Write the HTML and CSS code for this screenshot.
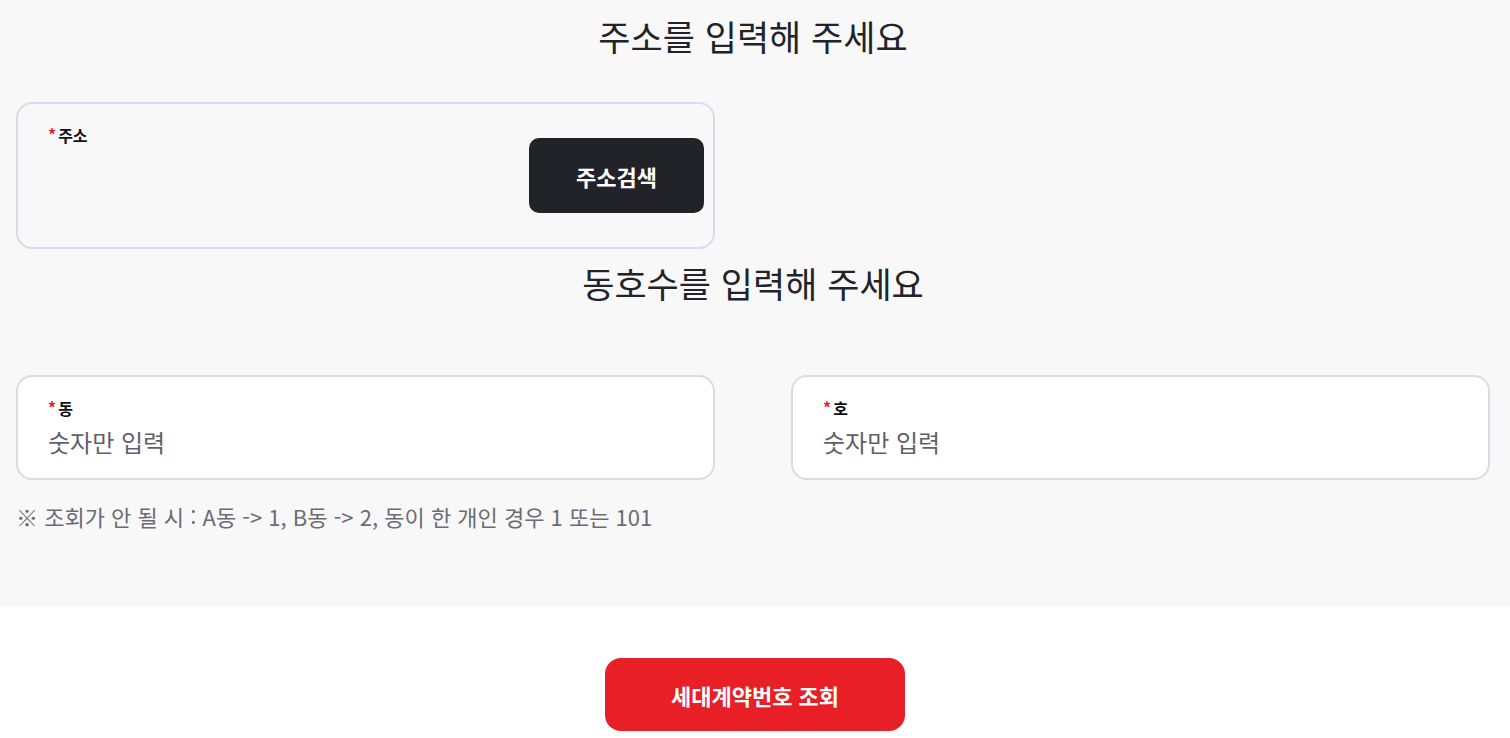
FILE: index.html
```html
<!DOCTYPE html>
<html lang="ko">
<head>
    <meta charset="UTF-8">
    <meta name="viewport" content="width=device-width, initial-scale=1.0">
    <title>세대계약번호 조회</title>
    <link rel="stylesheet" href="styles.css">
</head>
<body>
    <section class="form-section">
        <h2 class="form-title">주소를 입력해 주세요</h2>

        <div class="address-box">
            <label class="field-label" for="address"><span class="req">*</span>주소</label>
            <button class="search-btn" type="button">주소검색</button>
        </div>

        <h2 class="form-title second">동호수를 입력해 주세요</h2>

        <div class="unit-row">
            <div class="field-box">
                <label class="field-label" for="dong"><span class="req">*</span>동</label>
                <input type="text" id="dong" placeholder="숫자만 입력">
            </div>
            <div class="field-box">
                <label class="field-label" for="ho"><span class="req">*</span>호</label>
                <input type="text" id="ho" placeholder="숫자만 입력">
            </div>
        </div>

        <p class="notice">※ 조회가 안 될 시 : A동 -&gt; 1, B동 -&gt; 2, 동이 한 개인 경우 1 또는 101</p>
    </section>

    <div class="actions">
        <button class="submit-btn" type="button">세대계약번호 조회</button>
    </div>
</body>
</html>
```

FILE: styles.css
```css
body {
    margin: 0;
    padding: 0;
    background: #ffffff;
    font-family: "Noto Sans CJK KR", "Noto Sans", sans-serif;
    color: #222328;
}

.form-section {
    background: #f8f8f9;
    padding: 14px 20px 76px 16px;
}

.form-title {
    margin: 0;
    font-size: 35px;
    line-height: 44px;
    font-weight: 400;
    text-align: center;
    color: #222328;
}

.form-title.second {
    margin-top: 12px;
}

.address-box {
    width: 699px;
    box-sizing: border-box;
    margin-top: 44px;
    display: flex;
    padding: 21px 9px 23px 30px;
    border: 2px solid #d9dbe6;
    border-radius: 16px;
    background: #f8f8f9;
}

.field-label {
    display: block;
    font-size: 16px;
    line-height: 20px;
    font-weight: 700;
    color: #111111;
    align-self: flex-start;
}

.req {
    color: #e81f26;
    margin-right: 2px;
    position: relative;
    top: -1px;
}

.search-btn {
    margin: 13px 0 11px auto;
    width: 175px;
    height: 75px;
    border: none;
    border-radius: 10px;
    background: #222328;
    color: #ffffff;
    font-family: inherit;
    font-size: 22px;
    font-weight: 700;
    cursor: pointer;
}

.unit-row {
    display: grid;
    grid-template-columns: 1fr 1fr;
    gap: 76px;
    margin-top: 70px;
}

.field-box {
    box-sizing: border-box;
    height: 105px;
    padding: 21px 30px 16px 30px;
    border: 2px solid #d9dbe6;
    border-radius: 16px;
    background: #ffffff;
}

.field-box input {
    display: block;
    width: 100%;
    margin-top: 7px;
    padding: 0;
    border: none;
    outline: none;
    background: transparent;
    font-family: inherit;
    font-size: 24px;
    line-height: 34px;
    height: 34px;
    color: #222328;
}

.field-box input::placeholder {
    color: #5f6068;
}

.notice {
    margin: 21px 0 0 0;
    font-size: 22px;
    line-height: 30px;
    color: #6b6c73;
}

.actions {
    display: flex;
    justify-content: center;
    padding-top: 51px;
}

.submit-btn {
    width: 300px;
    height: 73px;
    border: none;
    border-radius: 16px;
    background: #e81f26;
    color: #ffffff;
    font-family: inherit;
    font-size: 22px;
    font-weight: 700;
    cursor: pointer;
}
```
